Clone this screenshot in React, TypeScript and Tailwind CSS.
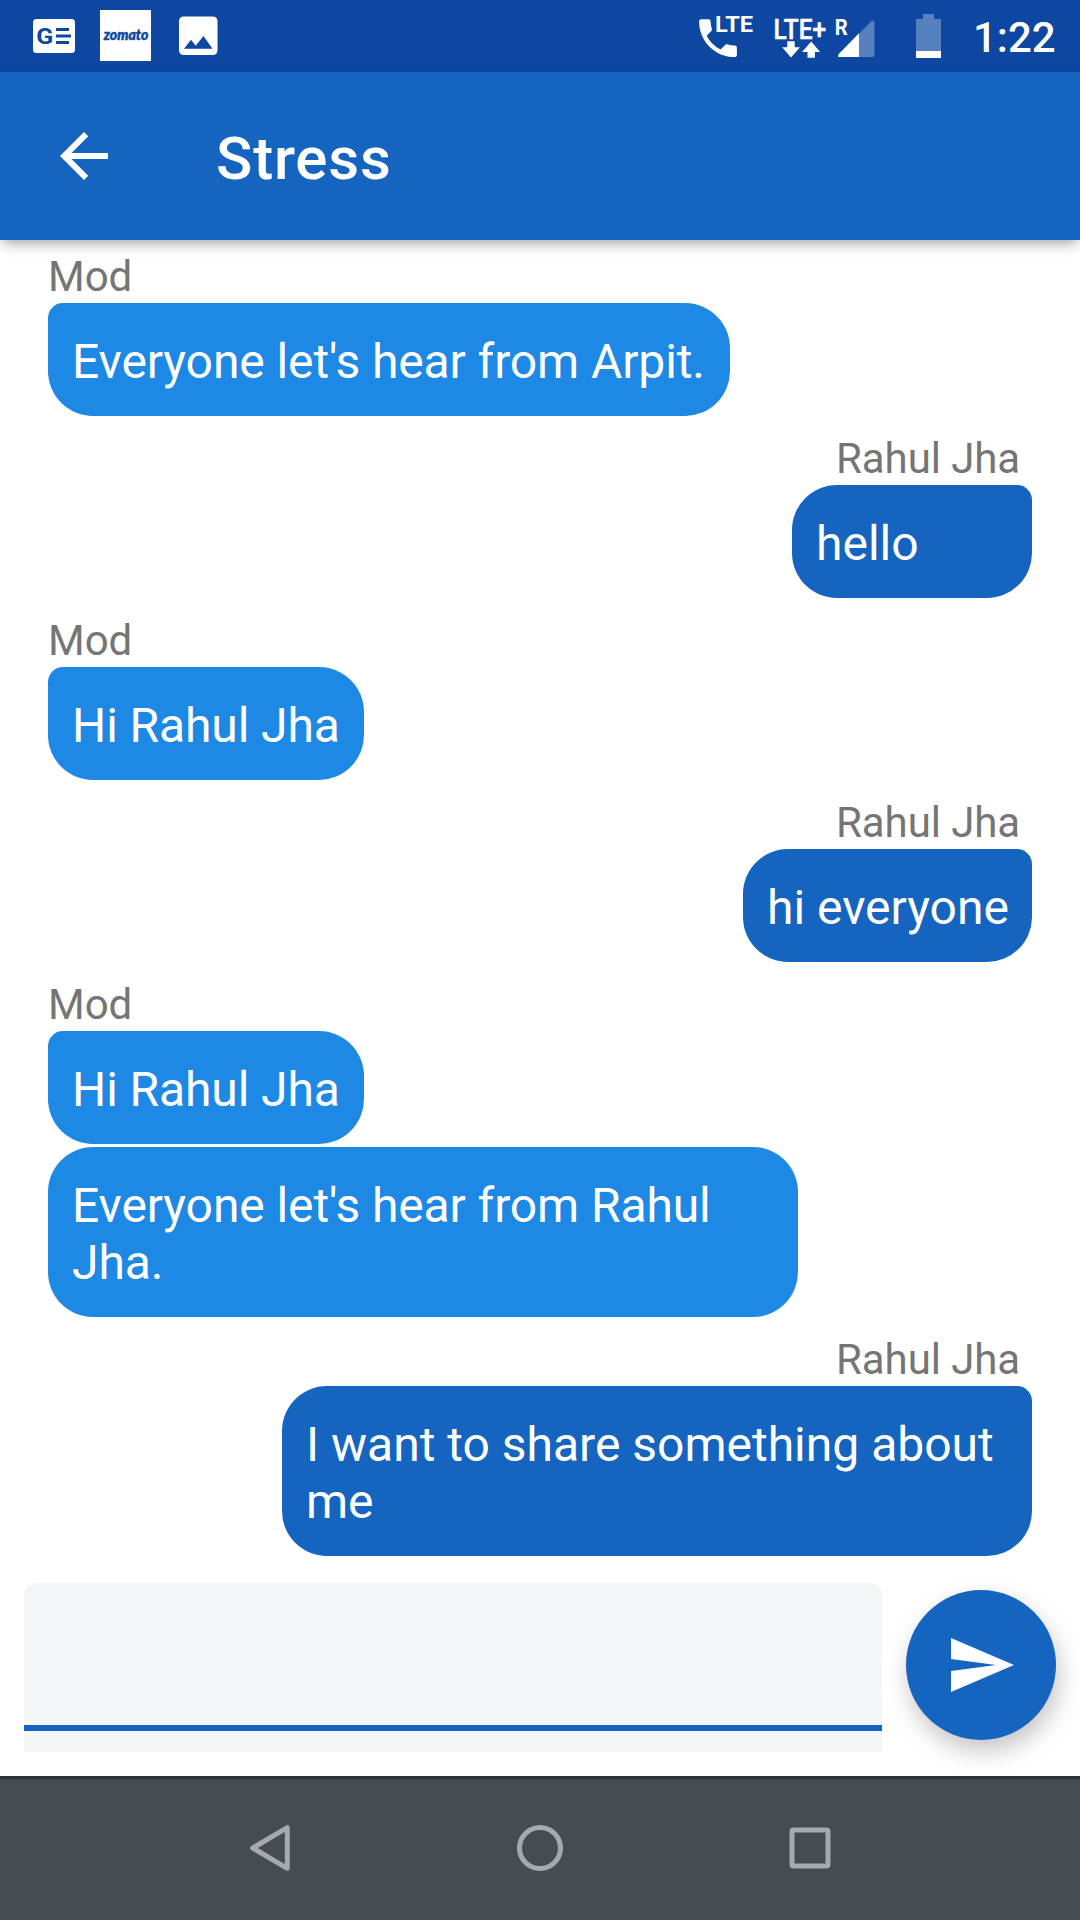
import React from "react";

type Message = {
  author?: string;
  text: string;
  mine?: boolean;
  size: string;
  shape: string;
  gap: string;
};

const messages: Message[] = [
  { author: "Mod", text: "Everyone let's hear from Arpit.", size: "w-[682px] h-[113px]", shape: "rounded-[45px] rounded-tl-[15px]", gap: "mt-3" },
  { author: "Rahul Jha", text: "hello", mine: true, size: "w-[240px] h-[113px]", shape: "rounded-[45px] rounded-tr-[15px]", gap: "mt-[18px]" },
  { author: "Mod", text: "Hi Rahul Jha", size: "w-[316px] h-[113px]", shape: "rounded-[45px] rounded-tl-[15px]", gap: "mt-[18px]" },
  { author: "Rahul Jha", text: "hi everyone", mine: true, size: "w-[289px] h-[113px]", shape: "rounded-[45px] rounded-tr-[15px]", gap: "mt-[18px]" },
  { author: "Mod", text: "Hi Rahul Jha", size: "w-[316px] h-[113px]", shape: "rounded-[45px] rounded-tl-[15px]", gap: "mt-[18px]" },
  { text: "Everyone let's hear from Rahul\nJha.", size: "w-[750px] h-[170px]", shape: "rounded-[45px]", gap: "mt-[3px]" },
  { author: "Rahul Jha", text: "I want to share something about\nme", mine: true, size: "w-[750px] h-[170px]", shape: "rounded-[45px] rounded-tr-[15px]", gap: "mt-[18px]" },
];

function StatusBar() {
  return (
    <div className="flex h-[72px] shrink-0 items-start bg-[#0D47A1] text-white">
      <svg className="ml-[33px] mt-[19px] h-[34px] w-[42px]" viewBox="0 0 42 34">
        <rect width="42" height="34" rx="3.5" fill="#fff" />
        <text x="3.2" y="24.8" fontFamily="Roboto" fontWeight="700" fontSize="22" textLength="17" lengthAdjust="spacingAndGlyphs" fill="#0D47A1">G</text>
        <path d="M23 9h13v3H23zM23 15.5h15v3H23zM23 22h13v3H23z" fill="#0D47A1" />
      </svg>
      <svg className="ml-[25px] mt-[10px] h-[51px] w-[51px] overflow-visible" viewBox="0 0 51 51">
        <rect width="51" height="51" fill="#fff" />
        <text x="3.8" y="30" fontFamily="Lato" fontWeight="900" fontStyle="italic" fontSize="15" textLength="44.5" lengthAdjust="spacingAndGlyphs" fill="#0D47A1" stroke="#0D47A1" strokeWidth="0.5">zomato</text>
      </svg>
      <svg className="ml-7 mt-[16px] h-10 w-10" viewBox="0 0 40 40">
        <rect x="0" y="0.5" width="38.5" height="38.5" rx="4.5" fill="#fff" />
        <path d="M5 32.8l7-9 4.7 6 7.8-9.8 9 12.8z" fill="#0D47A1" />
      </svg>
      <div className="flex-1" />
      <svg className="h-[72px] w-[58px] overflow-visible" viewBox="0 0 58 72">
        <g transform="translate(-4.2 13) scale(2.1)">
          <path d="M6.62 10.79c1.44 2.83 3.76 5.14 6.59 6.59l2.2-2.2c.27-.27.67-.36 1.02-.24 1.12.37 2.33.57 3.57.57.55 0 1 .45 1 1V20c0 .55-.45 1-1 1-9.39 0-17-7.61-17-17 0-.55.45-1 1-1h3.5c.55 0 1 .45 1 1 0 1.25.2 2.45.57 3.57.11.35.03.74-.25 1.02l-2.2 2.2z" fill="#fff" />
        </g>
        <text x="18" y="32" fontFamily="Roboto" fontWeight="700" fontSize="22.8" textLength="38" lengthAdjust="spacingAndGlyphs" fill="#fff">LTE</text>
      </svg>
      <svg className="ml-[18px] h-[72px] w-[52px] overflow-visible" viewBox="0 0 52 72">
        <text x="0.6" y="38.7" fontFamily="Roboto" fontWeight="500" fontSize="27.5" textLength="52.5" lengthAdjust="spacingAndGlyphs" fill="#fff" stroke="#fff" strokeWidth="0.5">LTE+</text>
        <path d="M14.3 41.3h7.4v6h5.3L18 57.6 9.1 47.3h5.2zM34.5 57.7h7.4v-5.8h5.3L38.2 41.6 29 51.9h5.5z" fill="#fff" />
      </svg>
      <svg className="ml-[10px] h-[72px] w-10 overflow-visible" viewBox="0 0 40 72">
        <path d="M37 20.8Q39.5 19.8 39.5 23V55q0 2-2 2H4.5Q2 56.5 3.8 54z" fill="#5780BE" />
        <path d="M24 33.3V57H4.5Q2 56.5 3.8 54z" fill="#fff" />
        <text x="-0.2" y="35.2" fontFamily="Roboto" fontWeight="700" fontSize="22.5" textLength="13" lengthAdjust="spacingAndGlyphs" fill="#fff">R</text>
      </svg>
      <svg className="ml-[41px] h-[72px] w-[25px]" viewBox="0 0 25 72">
        <path d="M7 14h11v5h7v39H0V19h7z" fill="#5780BE" />
        <path d="M0 51h25v7H0z" fill="#fff" />
      </svg>
      <div className="ml-[32px] mr-[23px] mt-[13px] w-[84px] whitespace-nowrap text-[42px] font-medium leading-[49px]">1:22</div>
    </div>
  );
}

function ChatMessage({ m }: { m: Message }) {
  return (
    <div className={`flex flex-col ${m.mine ? "items-end" : "items-start"} ${m.gap}`}>
      {m.author && (
        <div className={`mb-[2px] h-[49px] whitespace-nowrap text-[42px] leading-[49px] text-[#757575] ${m.mine ? "mr-3 tracking-[-0.1px]" : ""}`}>{m.author}</div>
      )}
      <div className={`whitespace-pre px-6 pt-[30px] text-[48px] leading-[57px] text-white ${m.size} ${m.shape} ${m.mine ? "bg-[#1565C0]" : "bg-[#1E88E5] tracking-[-0.1px]"}`}>{m.text}</div>
    </div>
  );
}

export default function App() {
  return (
    <div className="flex h-[1920px] w-[1080px] flex-col overflow-hidden bg-white font-['Roboto',sans-serif]">
      <StatusBar />
      <header className="relative z-10 flex h-[168px] shrink-0 items-center bg-[#1565C0] text-white shadow-[0_7px_12px_-3px_rgba(0,0,0,0.34)]">
        <svg className="ml-12 h-[72px] w-[72px]" viewBox="0 0 24 24" fill="#fff">
          <path d="M20 11H7.83l5.59-5.59L12 4l-8 8 8 8 1.41-1.41L7.83 13H20v-2z" />
        </svg>
        <h1 className="ml-24 mt-[6px] text-[60px] font-medium leading-[70px] tracking-[0.8px]">Stress</h1>
      </header>
      <main className="flex flex-1 flex-col px-12">
        {messages.map((m, i) => (
          <ChatMessage key={i} m={m} />
        ))}
      </main>
      <div className="flex h-[193px] shrink-0 gap-6 px-6">
        <div className="flex h-[169px] w-[858px] flex-col justify-end rounded-t-xl bg-[#F3F5F7] pb-[21px]">
          <div className="h-[6px] bg-[#1565C0]" />
        </div>
        <button className="mt-[7px] flex h-[150px] w-[150px] items-center justify-center rounded-full bg-[#1565C0] shadow-[3px_11px_24px_rgba(0,0,0,0.23)]">
          <svg className="h-[72px] w-[72px]" viewBox="0 0 24 24" fill="#fff">
            <path d="M2.01 21L23 12 2.01 3 2 10l15 2-15 2z" />
          </svg>
        </button>
      </div>
      <nav className="relative flex h-36 shrink-0 items-center justify-between border-t-[3px] border-[#2C3335] bg-[#454D52] px-[234px] pb-[3px]">
        <svg className="h-[72px] w-[72px]" viewBox="0 0 72 72" fill="none" stroke="#A6AAAD" strokeWidth="5" strokeLinejoin="round">
          <path d="M18.7 36L53.3 15.7V56.3z" />
        </svg>
        <svg className="h-[72px] w-[72px]" viewBox="0 0 72 72" fill="none" stroke="#A6AAAD" strokeWidth="5">
          <circle cx="36" cy="36" r="20.5" />
        </svg>
        <svg className="h-[72px] w-[72px]" viewBox="0 0 72 72" fill="none" stroke="#A6AAAD" strokeWidth="5">
          <rect x="18" y="18" width="36" height="36" rx="1.5" />
        </svg>
      </nav>
    </div>
  );
}
